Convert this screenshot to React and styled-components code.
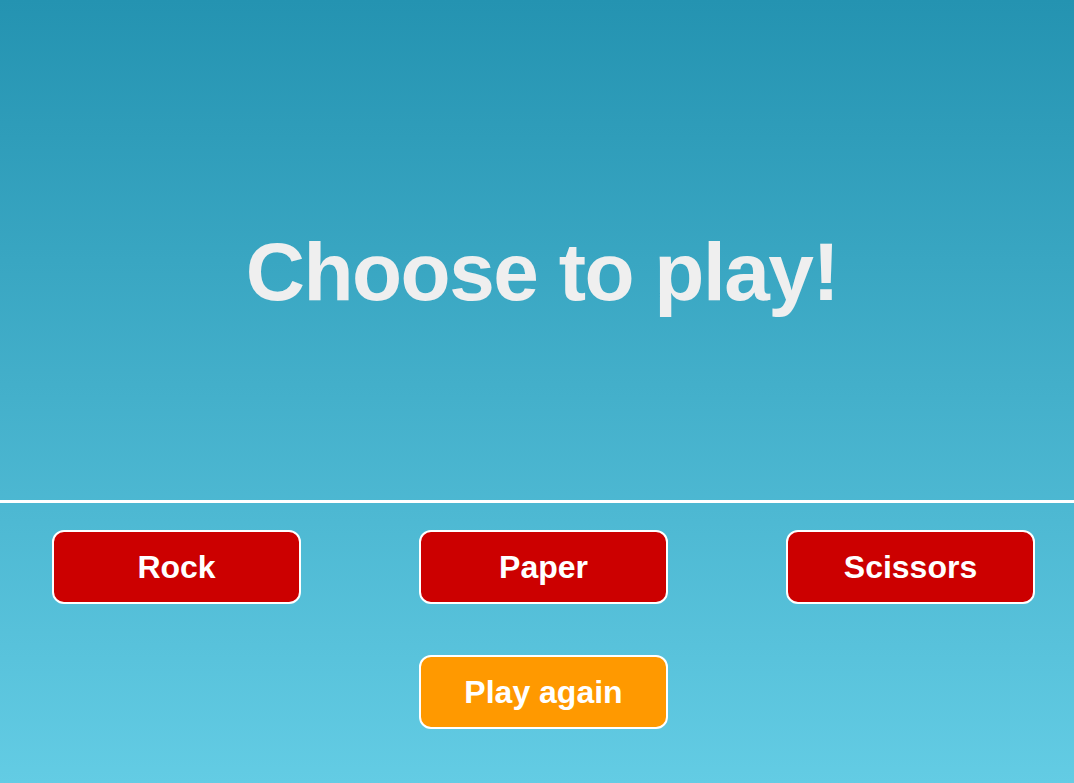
import React from "react";
import styled, { createGlobalStyle } from "styled-components";

const Global = createGlobalStyle`
  html, body { margin: 0; padding: 0; }
  body {
    font-family: "Liberation Sans", Arial, sans-serif;
    background: #63cce4;
    overflow: hidden;
  }
`;

const Page = styled.div`
  height: 783px;
  display: flex;
  flex-direction: column;
  background: linear-gradient(to bottom, #2493b1 0%, #63cce4 100%);
`;

const Stage = styled.div`
  box-sizing: border-box;
  height: 503px;
  padding: 43px 0 0 10px;
  display: flex;
  align-items: center;
  justify-content: center;
  border-bottom: 3px solid #ffffff;
`;

const Title = styled.h1`
  margin: 0;
  font-size: 82px;
  letter-spacing: -1.5px;
  font-weight: bold;
  color: #efefef;
  line-height: 1;
`;

const Choices = styled.div`
  display: flex;
  padding: 27px 0 0 52px;
  gap: 118px;
`;

const Button = styled.button`
  width: 249px;
  height: 74px;
  box-sizing: border-box;
  border: 2px solid #ffffff;
  border-radius: 12px;
  background: ${(p) => p.$bg};
  color: #ffffff;
  font-family: "Liberation Sans", Arial, sans-serif;
  font-size: 32px;
  font-weight: bold;
  cursor: pointer;
  padding: 0;
`;

const Again = styled.div`
  display: flex;
  padding: 51px 0 0 419px;
`;

export default function App() {
  return (
    <Page>
      <Global />
      <Stage>
        <Title>Choose to play!</Title>
      </Stage>
      <Choices>
        <Button $bg="#cc0000">Rock</Button>
        <Button $bg="#cc0000">Paper</Button>
        <Button $bg="#cc0000">Scissors</Button>
      </Choices>
      <Again>
        <Button $bg="#ff9900">Play again</Button>
      </Again>
    </Page>
  );
}
